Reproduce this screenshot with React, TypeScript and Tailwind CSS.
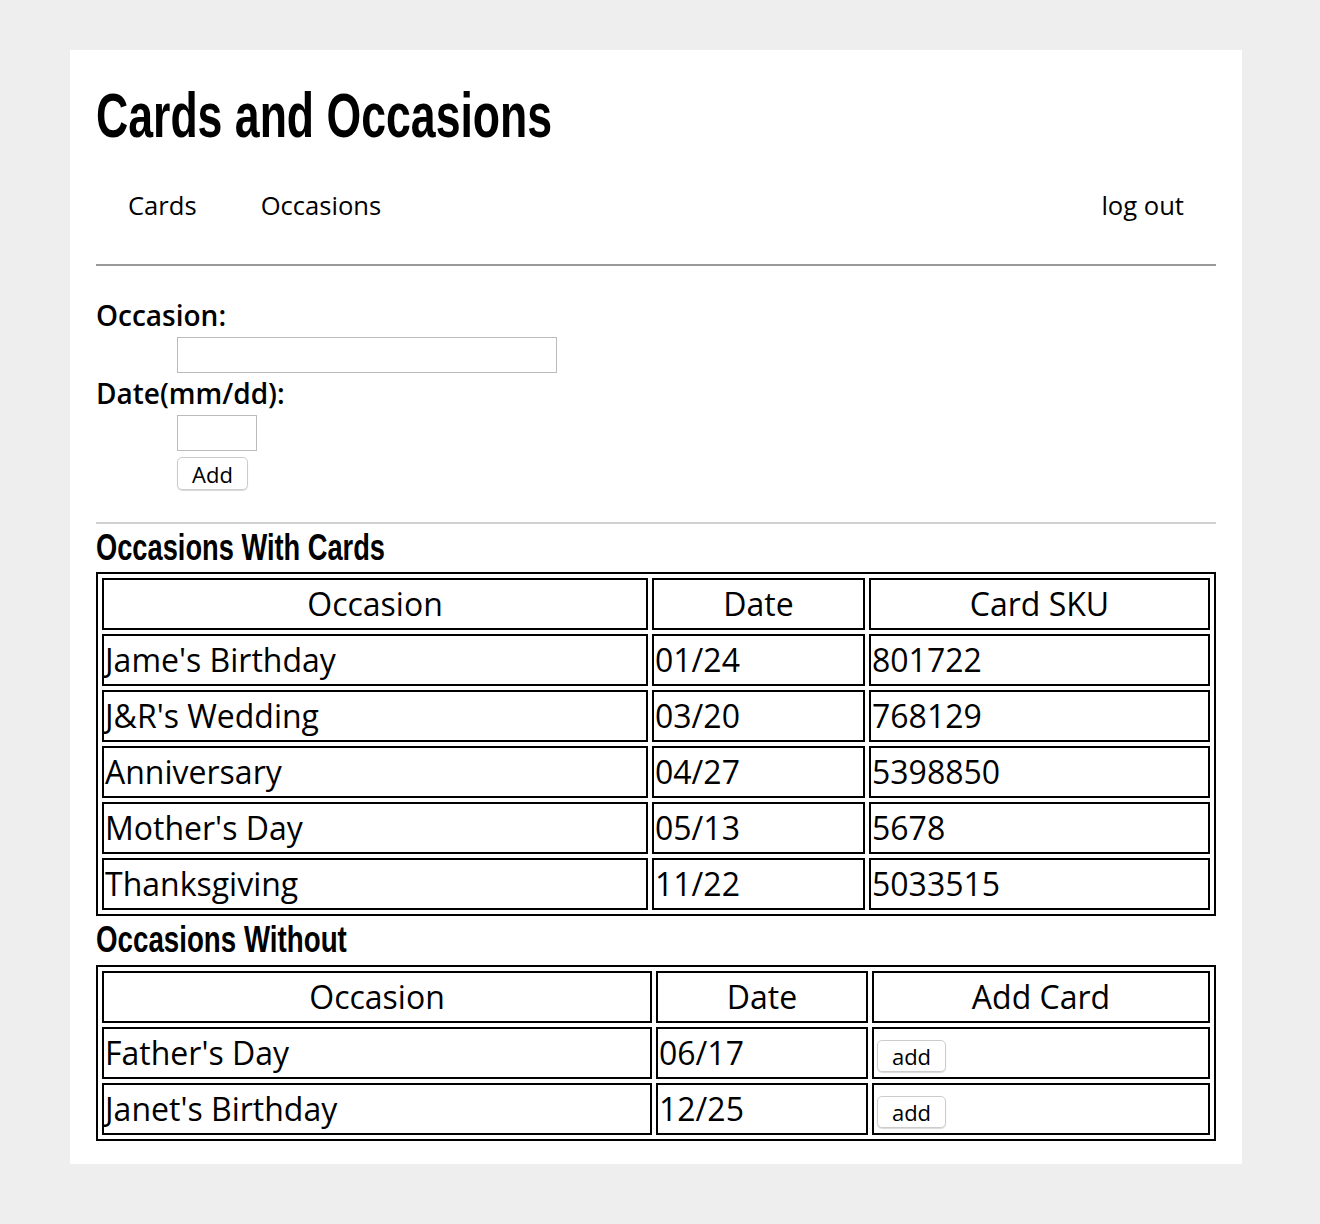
const withCards = [
  { name: "Jame's Birthday", date: "01/24", sku: "801722" },
  { name: "J&R's Wedding", date: "03/20", sku: "768129" },
  { name: "Anniversary", date: "04/27", sku: "5398850" },
  { name: "Mother's Day", date: "05/13", sku: "5678" },
  { name: "Thanksgiving", date: "11/22", sku: "5033515" },
];

const withoutCards = [
  { name: "Father's Day", date: "06/17" },
  { name: "Janet's Birthday", date: "12/25" },
];

// narrow bold headings: Liberation Sans squeezed to look like a narrow face
const narrow = "font-[family-name:'Liberation_Sans',Arial,sans-serif] font-bold inline-block origin-left whitespace-nowrap";
const cell = "border-2 border-black px-px py-px leading-[46px] text-left font-normal";
const head = "border-2 border-black px-px py-px leading-[46px] text-center font-normal";

function App() {
  return (
    <div className="min-h-screen bg-[#eeeeee] pt-[50px] pb-[60px] font-[family-name:'Open_Sans',sans-serif] text-black">
      <div className="ml-[70px] w-[1172px] bg-white px-[26px] pb-[23px] pt-[29px]">
        <div className="h-[72px]">
          <h1 className={`${narrow} text-[63px] leading-[72px] scale-x-[0.708]`}>Cards and Occasions</h1>
        </div>

        <nav className="mt-[37px] flex text-[25.6px] leading-[35px]">
          <a className="px-8">Cards</a>
          <a className="px-8">Occasions</a>
          <a className="ml-auto px-8">log out</a>
        </nav>

        <hr className="mt-[41px] border-t-2 border-[#999999]" />

        <form className="mt-[33px] text-[28px] font-semibold leading-[32px]">
          <label className="block">Occasion:</label>
          <input className="ml-[81px] mt-[6px] block h-[36px] w-[380px] border border-[#bbbbbb]" />
          <label className="mt-[4px] block">Date(mm/dd):</label>
          <input className="ml-[81px] mt-[6px] block h-[36px] w-[80px] border border-[#bbbbbb]" />
          <button
            type="button"
            className="ml-[81px] mt-[6px] block h-[33px] w-[71px] rounded-[5px] border border-[#cccccc] text-[22px] font-normal leading-[30px] shadow-[0_1px_1px_rgba(0,0,0,0.15)]"
          >
            Add
          </button>
        </form>

        <hr className="mt-[32px] border-t-2 border-[#d0d0d0]" />

        <div className="h-[48px]">
          <h2 className={`${narrow} text-[36px] leading-[48px] scale-x-[0.757]`}>Occasions With Cards</h2>
        </div>
        <table className="w-full border-2 border-separate border-spacing-[4px] border-black text-[32px]">
          <thead>
            <tr>
              <th className={`${head} w-[546px]`}>Occasion</th>
              <th className={`${head} w-[213px]`}>Date</th>
              <th className={head}>Card SKU</th>
            </tr>
          </thead>
          <tbody>
            {withCards.map((row) => (
              <tr key={row.name}>
                <td className={cell}>{row.name}</td>
                <td className={cell}>{row.date}</td>
                <td className={cell}>{row.sku}</td>
              </tr>
            ))}
          </tbody>
        </table>

        <div className="h-[49px]">
          <h2 className={`${narrow} text-[36px] leading-[48px] scale-x-[0.77]`}>Occasions Without</h2>
        </div>
        <table className="w-full border-2 border-separate border-spacing-[4px] border-black text-[32px]">
          <thead>
            <tr>
              <th className={`${head} w-[550px]`}>Occasion</th>
              <th className={`${head} w-[212px]`}>Date</th>
              <th className={head}>Add Card</th>
            </tr>
          </thead>
          <tbody>
            {withoutCards.map((row) => (
              <tr key={row.name}>
                <td className={cell}>{row.name}</td>
                <td className={cell}>{row.date}</td>
                <td className={`${cell} align-top`}>
                  <button
                    type="button"
                    className="ml-[2px] mt-[10px] block h-[32px] w-[69px] rounded-[5px] border border-[#cccccc] text-[22px] leading-[30px] shadow-[0_1px_1px_rgba(0,0,0,0.15)]"
                  >
                    add
                  </button>
                </td>
              </tr>
            ))}
          </tbody>
        </table>
      </div>
    </div>
  );
}

export default App;
